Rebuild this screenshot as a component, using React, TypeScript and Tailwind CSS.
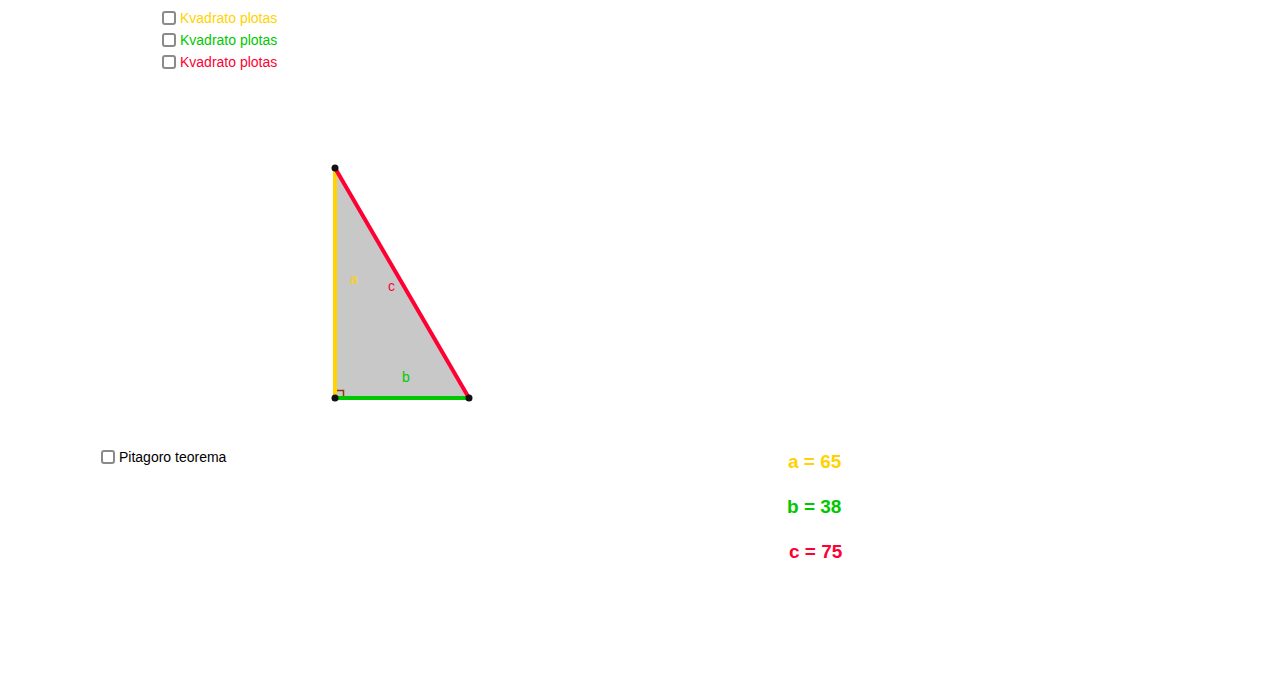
import React from 'react';

const font = { fontFamily: '"Liberation Sans", Arial, sans-serif' };

function Check({ label, color }: { label: string; color: string }) {
  return (
    <label className="flex items-center h-[22px] gap-[4px] text-[14px] leading-none" style={{ color }}>
      <span className="w-[14px] h-[14px] rounded-[3px] border-2 border-[#8a8a8a] bg-white box-border" />
      <span className="pb-[1px]">{label}</span>
    </label>
  );
}

export default function App() {
  return (
    <div className="relative w-[1265px] h-[676px] bg-white overflow-hidden" style={font}>
      {/* checkbox list */}
      <div className="absolute left-[162px] top-[7px] flex flex-col">
        <Check label="Kvadrato plotas" color="#ffd200" />
        <Check label="Kvadrato plotas" color="#00c800" />
        <Check label="Kvadrato plotas" color="#ff0033" />
      </div>

      {/* triangle */}
      <svg className="absolute left-0 top-0" width="1265" height="676">
        <polygon points="335,168 335,398 469,398" fill="#c8c8c8" />
        <path d="M335 390.5 H343.5 V398" fill="none" stroke="#8b3a0a" strokeWidth="1.5" />
        <line x1="335" y1="168" x2="335" y2="398" stroke="#ffd200" strokeWidth="4" />
        <line x1="335" y1="398" x2="469" y2="398" stroke="#00c800" strokeWidth="4" />
        <line x1="335" y1="168" x2="469" y2="398" stroke="#ff0033" strokeWidth="4" />
        <circle cx="335" cy="168" r="3.5" fill="#111" />
        <circle cx="335" cy="398" r="3.5" fill="#111" />
        <circle cx="469" cy="398" r="3.5" fill="#111" />
        <text x="350" y="284" fontSize="14" fill="#ffd200" style={font}>a</text>
        <text x="388" y="291" fontSize="14" fill="#ff0033" style={font}>c</text>
        <text x="402" y="382" fontSize="14" fill="#00c800" style={font}>b</text>
      </svg>

      {/* theorem checkbox */}
      <div className="absolute left-[101px] top-[446px]">
        <Check label="Pitagoro teorema" color="#000000" />
      </div>

      {/* values */}
      <div className="absolute left-[780px] top-[450px] flex flex-col gap-[21px] text-[19px] font-bold leading-[24px]">
        <span className="text-[#ffd200] pl-[8px]">a = 65</span>
        <span className="text-[#00c800] pl-[7px]">b = 38</span>
        <span className="text-[#ff0033] pl-[9px]">c = 75</span>
      </div>
    </div>
  );
}
